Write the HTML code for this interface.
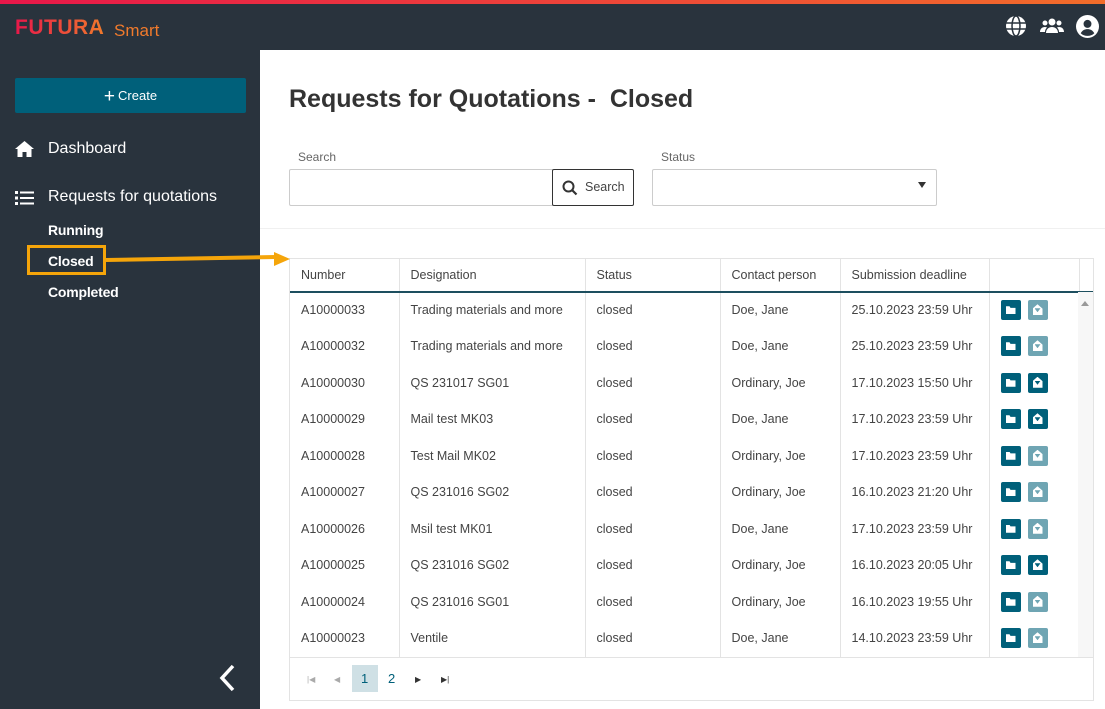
<!DOCTYPE html>
<html><head><meta charset="utf-8"><style>
*{box-sizing:border-box;margin:0;padding:0}
body{width:1105px;height:709px;overflow:hidden;font-family:"Liberation Sans",sans-serif;background:#29333d;position:relative}
.top{position:absolute;left:0;top:0;width:1105px;height:4px;background:linear-gradient(90deg,#e8174a,#f26d2a)}
.logo{position:absolute;left:15px;top:16px;font-weight:bold;font-size:21px;letter-spacing:.5px;background:linear-gradient(90deg,#e8174a,#f07a2c);-webkit-background-clip:text;color:transparent}
.smart{position:absolute;left:114px;top:21px;font-size:17px;color:#f07a2c}
.ic{position:absolute;top:15px}
.create{position:absolute;left:15px;top:78px;width:231px;height:35px;background:#00607a;border-radius:2px;color:#fff;font-size:13px;text-align:center;line-height:35px}
.create b{font-size:19px;font-weight:normal;vertical-align:-2px;margin-right:3px}
.nav{position:absolute;color:#fff;font-size:16px}
.sub{position:absolute;left:48px;color:#fff;font-size:14px;font-weight:bold;letter-spacing:-.2px}
.main{position:absolute;left:260px;top:50px;width:845px;height:659px;background:#fff}
h1{position:absolute;left:289px;top:85px;font-size:25px;color:#333;font-weight:bold}
.lbl{position:absolute;font-size:12px;color:#666}
table{position:absolute;left:290px;top:258px;border-collapse:collapse;font-size:12.5px;color:#444}
td{border-left:1px solid #e3e3e3;padding-left:11px;height:36.5px}
th{font-weight:normal;text-align:left;padding-left:11px;height:33px;border-left:1px solid #e3e3e3;border-bottom:2px solid #1d4f5f;border-top:1px solid #e3e3e3}
.b{display:inline-block;width:20px;height:20px;border-radius:2px;background:#00607a;margin-right:7px;vertical-align:middle;position:relative}
.b.l{background:#6fa5b3}
.b.f::after{content:"";position:absolute;left:5px;top:6px;width:10px;height:8px;background:#fff;clip-path:polygon(0 0,40% 0,50% 20%,100% 20%,100% 100%,0 100%)}
.b.e::after{content:"";position:absolute;left:5px;top:4px;width:10px;height:11px;background:#fff;clip-path:polygon(50% 0,100% 40%,100% 100%,0 100%,0 40%)}
.b.e::before{content:"";position:absolute;left:7px;top:8px;width:6px;height:4px;background:inherit;z-index:1;clip-path:polygon(0 0,100% 0,50% 100%)}
</style></head><body>
<div class="top"></div>
<div class="logo">FUTURA</div><div class="smart">Smart</div>
<svg class="ic" style="left:1005px" width="22" height="22" viewBox="0 0 22 22"><circle cx="11" cy="11" r="10" fill="#fff"/><g stroke="#29333d" stroke-width="1.5" fill="none"><ellipse cx="11" cy="11" rx="4" ry="10"/><line x1="1" y1="8" x2="21" y2="8"/><line x1="1" y1="14" x2="21" y2="14"/></g></svg>
<svg class="ic" style="left:1040px" width="24" height="22" viewBox="0 0 24 22"><g fill="#fff"><circle cx="12" cy="7" r="3.5"/><circle cx="5" cy="8" r="2.5"/><circle cx="19" cy="8" r="2.5"/><path d="M6 18c0-4 3-6 6-6s6 2 6 6z"/><path d="M0 17c0-3 2-5 5-5 1 0 2 .5 2 .5-1.5 1.5-2 3-2 4.5z"/><path d="M24 17c0-3-2-5-5-5-1 0-2 .5-2 .5 1.5 1.5 2 3 2 4.5z"/></g></svg>
<svg class="ic" style="left:1076px" width="23" height="23" viewBox="0 0 22 22"><circle cx="11" cy="11" r="11" fill="#fff"/><circle cx="11" cy="8.5" r="3.8" fill="#29333d"/><path d="M4.5 17.5c1.5-3 4-4 6.5-4s5 1 6.5 4c-1.8 1.8-4 2.5-6.5 2.5s-4.7-.7-6.5-2.5z" fill="#29333d"/></svg>
<div class="create"><b>+</b>Create</div>
<svg style="position:absolute;left:15px;top:141px" width="19" height="16" viewBox="0 0 19 16"><path d="M9.5 0L0 8h2.5v8h5v-5h4v5h5V8H19z" fill="#fff"/></svg>
<div class="nav" style="left:48px;top:140px">Dashboard</div>
<svg style="position:absolute;left:15px;top:191px" width="19" height="14"><g fill="#fff"><rect x="0" y="0" width="3" height="3"/><rect x="0" y="5.5" width="3" height="3"/><rect x="0" y="11" width="3" height="3"/><rect x="5" y="0.5" width="14" height="2"/><rect x="5" y="6" width="14" height="2"/><rect x="5" y="11.5" width="14" height="2"/></g></svg>
<div class="nav" style="left:48px;top:188px">Requests for quotations</div>
<div class="sub" style="top:222px">Running</div>
<div class="sub" style="top:253px">Closed</div>
<div class="sub" style="top:284px">Completed</div>
<svg style="position:absolute;left:218px;top:663px" width="18" height="30"><path d="M15 3L4 15l11 12" stroke="#fff" stroke-width="3.5" fill="none"/></svg>
<div class="main"></div>
<h1>Requests for Quotations -&nbsp; Closed</h1>
<div class="lbl" style="left:298px;top:150px">Search</div>
<div style="position:absolute;left:289px;top:169px;width:264px;height:37px;border:1px solid #ccc;border-radius:2px 0 0 2px"></div>
<div style="position:absolute;left:552px;top:169px;width:82px;height:37px;border:1px solid #333;border-radius:2px;font-size:12.5px;color:#444;line-height:35px;padding-left:32px">Search</div>
<svg style="position:absolute;left:562px;top:180px" width="16" height="16"><circle cx="6.5" cy="6.5" r="5" stroke="#333" stroke-width="2" fill="none"/><line x1="10" y1="10" x2="14.5" y2="14.5" stroke="#333" stroke-width="2.2"/></svg>
<div class="lbl" style="left:661px;top:150px">Status</div>
<div style="position:absolute;left:652px;top:169px;width:285px;height:37px;border:1px solid #ccc;border-radius:2px"></div>
<div style="position:absolute;left:918px;top:182px;border-left:4px solid transparent;border-right:4px solid transparent;border-top:6px solid #333"></div>
<div style="position:absolute;left:260px;top:228px;width:845px;height:1px;background:#f0f0f0"></div>
<div style="position:absolute;left:289px;top:258px;width:805px;height:443px;border:1px solid #e3e3e3"></div>
<table>
<tr><th style="width:109px;border-left:none">Number</th><th style="width:186px">Designation</th><th style="width:135px">Status</th><th style="width:120px">Contact person</th><th style="width:149px">Submission deadline</th><th style="width:90px"></th><th style="width:14px"></th></tr>
<tr><td style="border-left:none">A10000033</td><td>Trading materials and more</td><td>closed</td><td>Doe, Jane</td><td>25.10.2023 23:59 Uhr</td><td><span class="b f"></span><span class="b l e"></span></td><td></td></tr>
<tr><td style="border-left:none">A10000032</td><td>Trading materials and more</td><td>closed</td><td>Doe, Jane</td><td>25.10.2023 23:59 Uhr</td><td><span class="b f"></span><span class="b l e"></span></td><td></td></tr>
<tr><td style="border-left:none">A10000030</td><td>QS 231017 SG01</td><td>closed</td><td>Ordinary, Joe</td><td>17.10.2023 15:50 Uhr</td><td><span class="b f"></span><span class="b e"></span></td><td></td></tr>
<tr><td style="border-left:none">A10000029</td><td>Mail test MK03</td><td>closed</td><td>Doe, Jane</td><td>17.10.2023 23:59 Uhr</td><td><span class="b f"></span><span class="b e"></span></td><td></td></tr>
<tr><td style="border-left:none">A10000028</td><td>Test Mail MK02</td><td>closed</td><td>Ordinary, Joe</td><td>17.10.2023 23:59 Uhr</td><td><span class="b f"></span><span class="b l e"></span></td><td></td></tr>
<tr><td style="border-left:none">A10000027</td><td>QS 231016 SG02</td><td>closed</td><td>Ordinary, Joe</td><td>16.10.2023 21:20 Uhr</td><td><span class="b f"></span><span class="b l e"></span></td><td></td></tr>
<tr><td style="border-left:none">A10000026</td><td>Msil test MK01</td><td>closed</td><td>Doe, Jane</td><td>17.10.2023 23:59 Uhr</td><td><span class="b f"></span><span class="b l e"></span></td><td></td></tr>
<tr><td style="border-left:none">A10000025</td><td>QS 231016 SG02</td><td>closed</td><td>Ordinary, Joe</td><td>16.10.2023 20:05 Uhr</td><td><span class="b f"></span><span class="b e"></span></td><td></td></tr>
<tr><td style="border-left:none">A10000024</td><td>QS 231016 SG01</td><td>closed</td><td>Ordinary, Joe</td><td>16.10.2023 19:55 Uhr</td><td><span class="b f"></span><span class="b l e"></span></td><td></td></tr>
<tr><td style="border-left:none">A10000023</td><td>Ventile</td><td>closed</td><td>Doe, Jane</td><td>14.10.2023 23:59 Uhr</td><td><span class="b f"></span><span class="b l e"></span></td><td></td></tr>
</table>
<div style="position:absolute;left:1078px;top:292px;width:15px;height:365px;background:#f7f7f7"></div>
<div style="position:absolute;left:1081px;top:301px;border-left:4px solid transparent;border-right:4px solid transparent;border-bottom:5px solid #999"></div>
<div style="position:absolute;left:290px;top:657px;width:803px;height:1px;background:#e3e3e3"></div>
<div style="position:absolute;left:352px;top:665px;width:26px;height:27px;background:#cfe0e5"></div>
<div style="position:absolute;left:361px;top:671px;font-size:13px;color:#00607a">1</div>
<div style="position:absolute;left:388px;top:671px;font-size:13px;color:#00607a">2</div>
<div style="position:absolute;left:307px;top:675px;font-size:8px;color:#aaa">|◀</div>
<div style="position:absolute;left:334px;top:675px;font-size:8px;color:#aaa">◀</div>
<div style="position:absolute;left:415px;top:675px;font-size:8px;color:#333">▶</div>
<div style="position:absolute;left:441px;top:675px;font-size:8px;color:#333">▶|</div>
<div style="position:absolute;left:27px;top:245px;width:79px;height:30px;border:3px solid #f5a50a"></div>
<div style="position:absolute;left:106px;top:258px;width:170px;height:4px;background:#f5a50a;transform:rotate(-1deg);transform-origin:left center"></div>
<div style="position:absolute;left:274px;top:252px;border-top:7px solid transparent;border-bottom:7px solid transparent;border-left:16px solid #f5a50a"></div>
</body></html>
